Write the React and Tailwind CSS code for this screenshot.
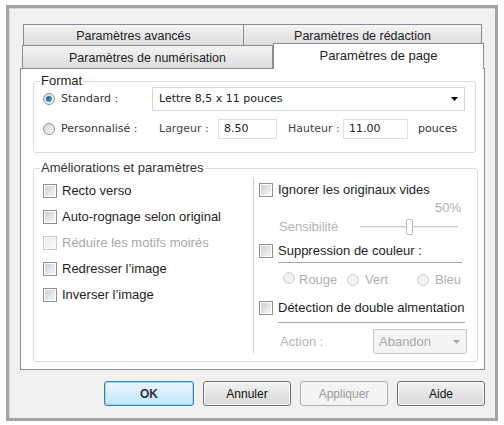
import React from 'react';

const Checkbox = ({ disabled }) => (
  <span
    className={`inline-flex items-center justify-center w-[14px] h-[14px] shrink-0 border ${
      disabled ? 'border-[#cbcbcb] bg-[#f7f7f7]' : 'border-[#8e8f8f] bg-white'
    }`}
  >
    <span
      className={`w-[10px] h-[10px] bg-gradient-to-br ${
        disabled ? 'from-[#ececec] to-[#fafafa]' : 'from-[#cfcfcf] to-[#f7f7f7]'
      }`}
    />
  </span>
);

const Radio = ({ checked, disabled }) => (
  <span
    className={`inline-flex items-center justify-center w-[12px] h-[12px] shrink-0 rounded-full border ${
      disabled ? 'border-[#cfcfcf] bg-[#f1f1f1]' : 'border-[#8e8f8f] bg-gradient-to-br from-[#d6d6d6] to-[#fafafa]'
    }`}
  >
    {checked && (
      <span className="w-[6px] h-[6px] rounded-full bg-gradient-to-br from-[#0f4f7f] to-[#5fb0e0]" />
    )}
  </span>
);

const Arrow = ({ color = '#000' }) => (
  <svg width="7" height="4" viewBox="0 0 7 4">
    <path d="M0 0 L7 0 L3.5 4 Z" fill={color} />
  </svg>
);

const Tab = ({ className = '', children }) => (
  <div
    className={`flex items-center justify-center border border-[#898c95] border-b-0 bg-gradient-to-b from-[#f4f4f4] to-[#dcdcdc] text-[12.5px] text-[#1e1e1e] ${className}`}
  >
    {children}
  </div>
);

const Button = ({ children, variant }) => {
  if (variant === 'default') {
    return (
      <button className="w-[90px] h-[25px] rounded-[3px] border border-[#3c7fb1] bg-gradient-to-b from-[#eaf6fd] to-[#bee6fd] text-[12px] font-bold text-[#333] shadow-[inset_0_0_0_1px_#9fd8f5]">
        {children}
      </button>
    );
  }
  if (variant === 'disabled') {
    return (
      <button className="w-[88px] h-[25px] rounded-[3px] border border-[#adb2b5] bg-[#f4f4f4] text-[12px] text-[#9a9a9a]">
        {children}
      </button>
    );
  }
  return (
    <button className="w-[88px] h-[25px] rounded-[3px] border border-[#707070] bg-gradient-to-b from-[#f2f2f2] to-[#d8d8d8] text-[12px] text-[#111] shadow-[inset_0_0_0_1px_#fbfbfb]">
      {children}
    </button>
  );
};

export default function App() {
  return (
    <div className="w-[504px] h-[425px] bg-white pt-[5px] pl-[6px] font-['Liberation_Sans',Arial,sans-serif] text-[#1e1e1e]">
      <div className="w-[492px] h-[416px] border-[3px] border-[#a4a4a4] bg-[#f0f0f0] shadow-[inset_1px_1px_0_#d8d8d8]">
        <div className="ml-[11px] pt-[16px] w-[465px]">
          {/* tab rows */}
          <div className="flex h-[21px] ml-[3px]">
            <Tab className="w-[221px] pt-[3px]">Paramètres avancés</Tab>
            <Tab className="w-[238px] border-l-0 pt-[3px]">Paramètres de rédaction</Tab>
          </div>
          <div className="flex items-end h-[23px]">
            <Tab className="w-[251px] h-[23px] ml-[2px] pt-[2px]">Paramètres de numérisation</Tab>
            <div className="relative z-10 w-[211px] h-[26px] -mb-px border border-[#898c95] border-b-0 bg-white flex items-center justify-center text-[13px] text-[#1e1e1e] pb-[2px]">
              Paramètres de page
            </div>
          </div>

          {/* panel */}
          <div className="h-[302px] border border-[#898c95] bg-white pt-[6px] px-[12px]">
            <fieldset className="h-[78px] border border-[#dcdcdc] rounded-[3px] pl-[6px] pr-[10px]">
              <legend className="px-[1px] text-[13px] leading-[12px]">Format</legend>
              <div className="pl-[3px] font-['DejaVu_Sans',sans-serif] text-[11px]">
                <div className="flex items-center h-[24px]">
                  <Radio checked />
                  <span className="ml-[6px] w-[91px] text-[#333]">Standard :</span>
                  <div className="flex items-center justify-between w-[313px] h-[24px] border border-[#d5d5d5] bg-white pl-[6px] pr-[6px]">
                    <span className="text-[#222]">Lettre 8,5 x 11 pouces</span>
                    <Arrow />
                  </div>
                </div>
                <div className="flex items-center h-[20px] mt-[8px]">
                  <Radio />
                  <span className="ml-[6px] w-[98px] text-[#333]">Personnalisé :</span>
                  <span className="w-[59px] text-[#444]">Largeur :</span>
                  <div className="flex items-center w-[59px] h-[20px] border border-[#e0e0e0] pl-[5px] text-[#222]">8.50</div>
                  <span className="ml-[11px] w-[55px] text-[#444]">Hauteur :</span>
                  <div className="flex items-center w-[65px] h-[20px] border border-[#e0e0e0] pl-[5px] text-[#222]">11.00</div>
                  <span className="ml-[10px] text-[#333]">pouces</span>
                </div>
              </div>
            </fieldset>

            <fieldset className="mt-[9px] h-[200px] border border-[#dcdcdc] rounded-[3px] pl-[6px] pr-[10px]">
              <legend className="px-[1px] text-[13px] leading-[12px] text-[#333]">Améliorations et paramètres</legend>
              <div className="flex text-[13px]">
                {/* left column */}
                <div className="w-[213px] pl-[3px] pt-[4px]">
                  {[
                    ['Recto verso', false],
                    ['Auto-rognage selon original', false],
                    ['Réduire les motifs moirés', true],
                    ['Redresser l\u2019image', false],
                    ['Inverser l\u2019image', false],
                  ].map(([label, disabled]) => (
                    <div key={label} className="flex items-center h-[26px]">
                      <Checkbox disabled={disabled} />
                      <span className={`ml-[5px] whitespace-nowrap ${disabled ? 'text-[#a8a8a8]' : 'text-[#1e1e1e]'}`}>{label}</span>
                    </div>
                  ))}
                </div>

                <div className="w-px h-[176px] mt-[3px] bg-[#d0d0d0]" />

                {/* right column */}
                <div className="flex-1 pl-[5px] pt-[4px]">
                  <div className="flex items-center h-[24px]">
                    <Checkbox />
                    <span className="ml-[5px]">Ignorer les originaux vides</span>
                  </div>
                  <div className="h-[12px] flex items-center justify-end pr-[6px] text-[13px] text-[#b0b0b0]">50%</div>
                  <div className="flex items-center h-[26px] pl-[20px]">
                    <span className="w-[81px] text-[#b4b4b4]">Sensibilité</span>
                    <div className="relative w-[98px] h-[16px] flex items-center">
                      <div className="w-full h-[2px] bg-[#c9c9c9] border-b border-[#ececec]" />
                      <div className="absolute left-[46px] top-0 w-[7px] h-[16px] rounded-[2px] border border-[#b8b8b8] bg-white" />
                    </div>
                  </div>
                  <div className="flex items-center h-[22px]">
                    <Checkbox />
                    <span className="ml-[5px]">Suppression de couleur :</span>
                  </div>
                  <div className="ml-[19px] w-[184px] h-px bg-[#a8a8a8]" />
                  <div className="flex items-center h-[34px] text-[#b0b0b0]">
                    <span className="ml-[24px]"><Radio disabled /></span>
                    <span className="ml-[4px] w-[48px]">Rouge</span>
                    <Radio disabled />
                    <span className="ml-[6px] w-[52px]">Vert</span>
                    <Radio disabled />
                    <span className="ml-[6px]">Bleu</span>
                  </div>
                  <div className="flex items-center h-[22px]">
                    <Checkbox />
                    <span className="ml-[5px] whitespace-nowrap">Détection de double almentation</span>
                  </div>
                  <div className="mt-[3px] ml-[19px] w-[187px] h-px bg-[#a8a8a8]" />
                  <div className="flex items-center pt-[6px] pl-[21px]">
                    <span className="w-[93px] text-[#b4b4b4]">Action :</span>
                    <div className="flex items-center justify-between w-[94px] h-[25px] border border-[#c9c9c9] rounded-[2px] bg-[#f4f4f4] pl-[5px] pr-[6px] text-[#a8a8a8]">
                      <span>Abandon</span>
                      <Arrow color="#a8a8a8" />
                    </div>
                  </div>
                </div>
              </div>
            </fieldset>
          </div>

          {/* buttons */}
          <div className="flex justify-end gap-[9px] mt-[11px]">
            <Button variant="default">OK</Button>
            <Button>Annuler</Button>
            <Button variant="disabled">Appliquer</Button>
            <Button>Aide</Button>
          </div>
        </div>
      </div>
    </div>
  );
}
